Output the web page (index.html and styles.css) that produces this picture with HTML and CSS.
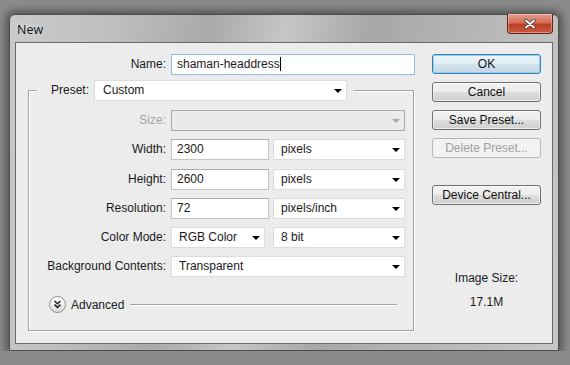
FILE: index.html
```
<!DOCTYPE html><html lang="en"><head><meta charset="UTF-8"><meta name="viewport" content="width=device-width, initial-scale=1.0"><title>New</title><link rel="stylesheet" href="styles.css"></head><body>
<div class="window">
  <div class="titlebar">
    <span class="title">New</span>
    <div class="close">
      <svg width="12" height="10" viewBox="0 0 12 10"><path d="M2 1.5L10 8.5M10 1.5L2 8.5" stroke="#3d3d4a" stroke-width="3.4" stroke-linecap="round"/><path d="M2 1.5L10 8.5M10 1.5L2 8.5" stroke="#fff" stroke-width="1.8" stroke-linecap="round"/></svg>
    </div>
  </div>
  <div class="client">
    <div class="form">
      <div class="name-row">
        <span class="lbl name-lbl">Name:</span>
        <div class="field name">shaman-headdress<span class="caret"></span></div>
      </div>
      <fieldset class="group">
        <legend class="legend"><div class="legend-in">
          <span class="preset-lbl">Preset:</span>
          <div class="combo preset">Custom<i class="arrow"></i></div>
        </div></legend>
        <div class="rows">
          <span class="lbl off">Size:</span>
          <div class="ctrl"><div class="combo off wide"><i class="arrow"></i></div></div>
          <span class="lbl">Width:</span>
          <div class="ctrl"><div class="field num">2300</div><div class="combo unit">pixels<i class="arrow"></i></div></div>
          <span class="lbl">Height:</span>
          <div class="ctrl"><div class="field num">2600</div><div class="combo unit">pixels<i class="arrow"></i></div></div>
          <span class="lbl">Resolution:</span>
          <div class="ctrl"><div class="field num">72</div><div class="combo unit">pixels/inch<i class="arrow"></i></div></div>
          <span class="lbl">Color Mode:</span>
          <div class="ctrl"><div class="combo mode">RGB Color<i class="arrow"></i></div><div class="combo unit">8 bit<i class="arrow"></i></div></div>
          <span class="lbl">Background Contents:</span>
          <div class="ctrl"><div class="combo wide">Transparent<i class="arrow"></i></div></div>
        </div>
        <div class="advanced">
          <span class="adv-btn"><svg width="17" height="17" viewBox="0 0 17 17"><path d="M5.5 5l3 2.8 3-2.8M5.5 8.6l3 2.8 3-2.8" fill="none" stroke="#222" stroke-width="1.5"/></svg></span>
          <span class="adv-text">Advanced</span>
          <span class="adv-line"></span>
        </div>
      </fieldset>
    </div>
    <div class="side">
      <button class="btn default">OK</button>
      <button class="btn">Cancel</button>
      <button class="btn">Save Preset...</button>
      <button class="btn" disabled>Delete Preset...</button>
      <button class="btn device">Device Central...</button>
      <div class="info">
        <div>Image Size:</div>
        <div class="size">17.1M</div>
      </div>
    </div>
  </div>
</div>
</body></html>
```
FILE: styles.css
```
body{margin:0;padding:14px 0 0 9px;background:#8b8b8b;font-family:"Liberation Sans",Arial,sans-serif;font-size:12px;color:#1a1a22;height:351px;box-sizing:border-box;}
.window{box-sizing:border-box;width:550px;height:337px;border:1px solid #4d4d4d;border-radius:6px 6px 2px 2px;padding:0 5px 6px 5px;background:linear-gradient(100deg,#cacaca 0%,#bebebe 18%,#a9a9a9 33%,#c6c6c6 46%,#a7a7a7 60%,#b4b4b4 75%,#c7c7c7 100%);box-shadow:0 0 9px 3px rgba(0,0,0,0.45);}
.titlebar{height:27px;display:flex;justify-content:space-between;align-items:flex-start;}
.title{margin:7px 0 0 2px;font-family:"Open Sans","Liberation Sans",sans-serif;font-size:12.5px;line-height:15px;color:#101018;text-shadow:0 0 6px rgba(255,255,255,0.7);}
.close{margin-top:-1px;width:46px;height:20px;box-sizing:border-box;border:1px solid #5e2418;border-top:none;border-radius:0 0 4px 4px;background:linear-gradient(#e2a090 0%,#d46d55 45%,#bf3f24 55%,#c85a3e 100%);box-shadow:inset 0 0 0 1px rgba(255,210,200,0.45);display:flex;align-items:center;justify-content:center;}
.client{box-sizing:border-box;height:302px;border:1px solid #6a6a6a;background:#ececec;display:flex;}
.form{width:400px;}
.name-row{display:flex;align-items:center;gap:5px;margin-top:11px;}
.lbl{text-align:right;line-height:21px;white-space:nowrap;}
.name-lbl{width:150px;}
.field{box-sizing:border-box;height:21px;background:#fff;border:1px solid #c4c4c4;border-top-color:#adadad;padding-left:5px;line-height:19px;}
.field.name{width:244px;border-color:#8fbbe4;}
.caret{display:inline-block;width:1px;height:14px;background:#000;vertical-align:-3px;}
.group{box-sizing:border-box;margin:5px 0 0 12px;width:386px;height:251px;padding:0;border:1px solid #a3a3a3;box-shadow:inset 1px 1px 0 #fff,1px 1px 0 #fff;}
.legend{margin-left:8px;padding:0 6px 0 14px;background:#ececec;}
.legend-in{display:flex;align-items:center;gap:4px;}
.preset-lbl{width:39px;line-height:21px;}
.combo{position:relative;box-sizing:border-box;height:21px;background:#fff;border:1px solid #dcdcdc;padding-left:7px;line-height:19px;}
.combo.preset{width:253px;padding-left:8px;}
.arrow{position:absolute;right:4px;top:8px;width:0;height:0;border-left:4px solid transparent;border-right:4px solid transparent;border-top:4px solid #000;}
.combo.off{background:#eaeaea;border-color:#ababab;}
.combo.off .arrow{border-top-color:#a6a6a6;}
.lbl.off{color:#a4a4a4;}
.rows{display:grid;grid-template-columns:137px 234px;column-gap:5px;row-gap:8.25px;margin-top:9px;}
.ctrl{display:flex;justify-content:space-between;}
.combo.wide{width:234px;}
.field.num{width:98px;}
.combo.unit{width:132px;}
.combo.mode{width:94px;}
.advanced{display:flex;align-items:center;margin:19px 16px 0 20px;height:17px;}
.adv-btn{width:17px;height:17px;box-sizing:border-box;border:1px solid #8e8e8e;border-radius:50%;background:linear-gradient(#ffffff,#dcdcdc);display:flex;}
.adv-btn svg{margin:-1px;}
.adv-text{margin-left:5px;}
.adv-line{flex:1;margin-left:6px;height:0;border-top:1px solid #a3a3a3;border-bottom:1px solid #fff;}
.side{width:109px;margin-left:16px;padding-top:11px;display:flex;flex-direction:column;gap:8px;}
.btn{height:20px;box-sizing:border-box;font-family:inherit;font-size:12px;color:#111;border:1px solid #707070;border-radius:3px;padding:0;background:linear-gradient(#f3f3f3 0%,#ebebeb 48%,#dddddd 52%,#cfcfcf 100%);box-shadow:inset 0 0 0 1px rgba(255,255,255,0.6);}
.btn.default{border-color:#3c7fb1;background:linear-gradient(#eaf5fc 0%,#e2eef6 48%,#d2e3ee 52%,#c6d8e4 100%);box-shadow:inset 0 0 0 1px #97d1ef;}
.btn:disabled{color:#a0a0a0;border-color:#b5b5b5;background:#f2f2f2;box-shadow:none;}
.btn.device{margin-top:19px;}
.info{margin-top:58px;text-align:center;line-height:14px;}
.size{margin-top:10px;}
```
